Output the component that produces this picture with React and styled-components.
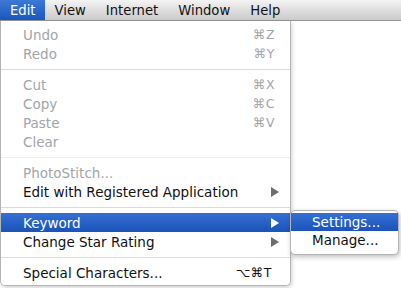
import React from 'react'
import styled, { createGlobalStyle } from 'styled-components'

const Global = createGlobalStyle`
  html, body { margin: 0; padding: 0; background: #fff; }
  body { font-family: "DejaVu Sans", "Liberation Sans", sans-serif; }
`

const Page = styled.div`
  width: 401px;
  height: 288px;
  overflow: hidden;
  display: flex;
  flex-direction: column;
  background: #fff;
`

const MenuBar = styled.div`
  height: 21px;
  flex-shrink: 0;
  display: flex;
  align-items: stretch;
  background: linear-gradient(#f4f4f4, #dcdcdc 55%, #cbcbcb);
  border-bottom: 1px solid #959595;
  box-sizing: border-box;
`

const BarItem = styled.div`
  display: flex;
  align-items: center;
  padding: 0 ${p => p.$pad || 10}px 0 10px;
  font-size: 13.2px;
  color: ${p => (p.$active ? '#fff' : '#111')};
  background: ${p => (p.$active ? 'linear-gradient(#3d79d6, #1a57bd)' : 'none')};
`

const Stage = styled.div`
  display: flex;
  align-items: flex-start;
`

const Dropdown = styled.div`
  width: 291px;
  box-sizing: border-box;
  padding: 4px 0 3px;
  background: rgba(255, 255, 255, 0.97);
  border: 1px solid #b4b4b4;
  border-top: none;
  border-radius: 0 0 5px 5px;
  box-shadow: 1px 2px 4px rgba(0, 0, 0, 0.18);
`

const Item = styled.div`
  position: relative;
  height: 19px;
  display: flex;
  align-items: center;
  padding: 0 ${p => p.$right || 15}px 0 22px;
  font-size: 13.5px;
  color: ${p => (p.$active ? '#fff' : p.$disabled ? '#a2a5aa' : '#111')};
  background: ${p => (p.$active ? 'linear-gradient(#3570d4, #1b53b8)' : 'none')};
`

const Label = styled.span`
  flex: 1;
  white-space: nowrap;
`

const Shortcut = styled.span`
  color: inherit;
  font-size: 12.5px;
  letter-spacing: 0.5px;
`

const Arrow = styled.span`
  width: 0;
  height: 0;
  border-top: 5px solid transparent;
  border-bottom: 5px solid transparent;
  border-left: 8px solid ${p => (p.$light ? '#fff' : '#6e6e6e')};
`

const Separator = styled.div`
  height: 12px;
  display: flex;
  align-items: center;
  &::after {
    content: '';
    flex: 1;
    height: 1px;
    background: ${p => p.$faint ? '#eeeeee' : '#dcdcdc'};
  }
`

const SubMenu = styled.div`
  position: absolute;
  left: 100%;
  top: -3px;
  width: 109px;
  box-sizing: border-box;
  padding: 2px 0 5px;
  background: #fff;
  border: 1px solid #b4b4b4;
  border-radius: 5px;
  box-shadow: 1px 2px 5px rgba(0, 0, 0, 0.25);
`

const SubItem = styled(Item)`
  height: 18px;
  padding: 0 8px 0 21px;
`

const App = () => (
  <Page>
    <Global />
    <MenuBar>
      <BarItem $active $pad={9}>Edit</BarItem>
      <BarItem>View</BarItem>
      <BarItem>Internet</BarItem>
      <BarItem>Window</BarItem>
      <BarItem>Help</BarItem>
    </MenuBar>
    <Stage>
      <Dropdown>
        <Item $disabled><Label>Undo</Label><Shortcut>⌘Z</Shortcut></Item>
        <Item $disabled><Label>Redo</Label><Shortcut>⌘Y</Shortcut></Item>
        <Separator />
        <Item $disabled><Label>Cut</Label><Shortcut>⌘X</Shortcut></Item>
        <Item $disabled><Label>Copy</Label><Shortcut>⌘C</Shortcut></Item>
        <Item $disabled><Label>Paste</Label><Shortcut>⌘V</Shortcut></Item>
        <Item $disabled><Label>Clear</Label></Item>
        <Separator $faint />
        <Item $disabled><Label>PhotoStitch...</Label></Item>
        <Item $right={11}><Label>Edit with Registered Application</Label><Arrow /></Item>
        <Separator />
        <Item $active $right={11}>
          <Label>Keyword</Label><Arrow $light />
          <SubMenu>
            <SubItem $active><Label>Settings...</Label></SubItem>
            <SubItem><Label>Manage...</Label></SubItem>
          </SubMenu>
        </Item>
        <Item $right={11}><Label>Change Star Rating</Label><Arrow /></Item>
        <Separator />
        <Item $right={18}><Label>Special Characters...</Label><Shortcut>⌥⌘T</Shortcut></Item>
      </Dropdown>
    </Stage>
  </Page>
)

export default App
